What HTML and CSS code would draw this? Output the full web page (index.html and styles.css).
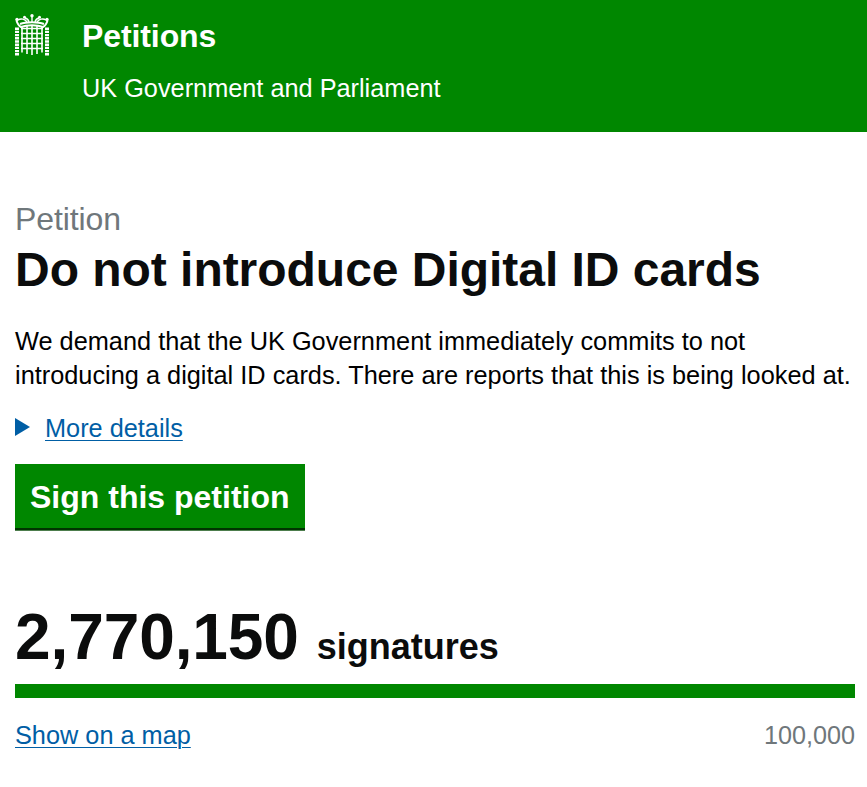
FILE: index.html
```html
<!DOCTYPE html>
<html lang="en">
<head>
<meta charset="utf-8">
<title>Do not introduce Digital ID cards - Petitions</title>
<link rel="stylesheet" href="styles.css">
</head>
<body>
<header class="site-header">
  <svg class="crest" viewBox="0 0 34 42" width="34" height="42" aria-hidden="true">
    <g fill="none" stroke="#fff">
      <path d="M1.5 6.5 C2.5 10 4 12 6 13 C12 10.5 22 10.5 28 13 C30 12 31.5 10 32.5 6.5" stroke-width="2"/>
      <path d="M5 10 C11 7.5 23 7.5 29 10" stroke-width="2"/>
      <path d="M3 6 C6 4 10 5 12 8 M31 6 C28 4 24 5 22 8 M17 3 V8 M10 4 C12 4.5 13.5 6 14 8 M24 4 C22 4.5 20.5 6 20 8" stroke-width="1.4"/>
      <path d="M2 13.5 V41.5 M32 13.5 V41.5" stroke-width="4" stroke-dasharray="2.4 0.8"/>
      <path d="M7 13 V38.5 M12 12 V40 M17 12 V41 M22 12 V40 M27 13 V38.5" stroke-width="1.6"/>
      <path d="M6 14.5 H28 M6 19.5 H28 M6 24.5 H28 M6 29.5 H28 M6 34.5 H28" stroke-width="1.6"/>
    </g>
    <circle cx="17" cy="1.8" r="1.7" fill="#fff"/>
    <circle cx="2" cy="5.5" r="1.7" fill="#fff"/>
    <circle cx="32" cy="5.5" r="1.7" fill="#fff"/>
    <circle cx="9.5" cy="3.2" r="1.5" fill="#fff"/>
    <circle cx="24.5" cy="3.2" r="1.5" fill="#fff"/>
  </svg>
  <div class="site-titles">
    <a class="site-name" href="#">Petitions</a>
    <a class="site-sub" href="#">UK Government and Parliament</a>
  </div>
</header>
<main class="content">
  <span class="kicker">Petition</span>
  <h1 class="title">Do not introduce Digital ID cards</h1>
  <p class="lead">We demand that the UK Government immediately commits to not introducing a digital ID cards. There are reports that this is being looked at.</p>
  <div class="details">
    <span class="arrow"></span>
    <a class="link" href="#">More details</a>
  </div>
  <a class="button" href="#">Sign this petition</a>
  <div class="count"><span class="count-num">2,770,150</span> <span class="count-label">signatures</span></div>
  <div class="progress"><div class="progress-fill" style="width:100%"></div></div>
  <div class="under">
    <a class="link" href="#">Show on a map</a>
    <span class="goal">100,000</span>
  </div>
</main>
</body>
</html>
```

FILE: styles.css
```css
* { box-sizing: border-box; }
html, body { margin: 0; padding: 0; background: #fff; }
body {
  font-family: "Liberation Sans", Arial, sans-serif;
  color: #0b0c0c;
  overflow: hidden;
}
.site-header {
  display: flex;
  align-items: flex-start;
  background: #008700;
  height: 132px;
  padding: 14px 15px 0;
  color: #fff;
}
.crest { flex: none; display: block; margin-right: 33px; }
.site-titles { display: flex; flex-direction: column; padding-top: 3px; }
.site-name {
  color: #fff;
  text-decoration: none;
  font-weight: 700;
  font-size: 32px;
  letter-spacing: -0.1px;
  line-height: 38px;
}
.site-sub {
  color: #fff;
  text-decoration: none;
  font-size: 25.3px;
  line-height: 30px;
  margin-top: 18px;
}
.content { padding: 70px 12px 0 15px; }
.kicker {
  display: block;
  color: #6f777b;
  font-size: 32px;
  letter-spacing: -0.1px;
  line-height: 35px;
}
.title {
  margin: 8px 0 0;
  font-size: 48px;
  letter-spacing: -0.03px;
  line-height: 50px;
  font-weight: 700;
}
.lead {
  margin: 29px 0 0;
  font-size: 25.33px;
  line-height: 34px;
  color: #000;
}
.details {
  display: flex;
  align-items: center;
  margin-top: 18px;
  height: 36px;
}
.arrow {
  width: 0;
  height: 0;
  border-style: solid;
  border-width: 9px 0 9px 15px;
  border-color: transparent transparent transparent #005ea5;
  margin: 0 15px 3px 0;
}
.link {
  color: #005ea5;
  font-size: 25.3px;
  line-height: 30px;
  text-decoration: underline;
  text-decoration-thickness: 1px;
  text-underline-offset: 3px;
}
.button {
  display: inline-block;
  margin-top: 18px;
  background: #008700;
  color: #fff;
  font-weight: 700;
  font-size: 32px;
  line-height: 36px;
  height: 66px;
  padding: 15px 15px 0;
  text-decoration: none;
  box-shadow: inset 0 -2px 0 #003300, 0 1px 0 #4d7d4d;
}
.count {
  display: flex;
  align-items: baseline;
  gap: 18px;
  margin-top: 70px;
  height: 84px;
  line-height: 74px;
}
.count-num { font-size: 64px; font-weight: 700; letter-spacing: -0.1px; }
.count-label { font-size: 36px; font-weight: 700; }
.progress { height: 14px; background: #dee0e2; }
.progress-fill { height: 100%; background: #008700; }
.under {
  display: flex;
  justify-content: space-between;
  align-items: center;
  margin-top: 22px;
  height: 30px;
}
.goal { color: #6f777b; font-size: 25.2px; line-height: 30px; }
```
